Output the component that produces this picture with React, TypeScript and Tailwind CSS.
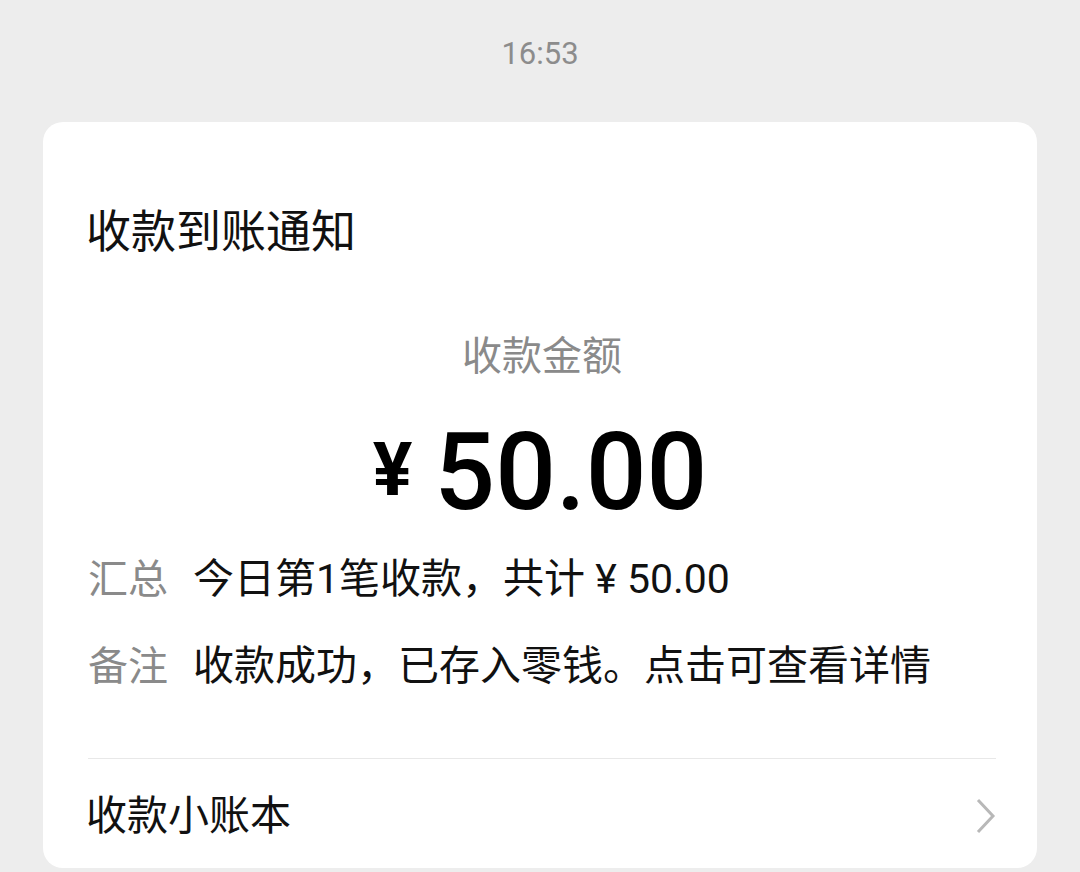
const FONT = "font-['Roboto','Noto_Sans_CJK_SC',sans-serif]";

function Row({ label, value }: { label: string; value: React.ReactNode }) {
  return (
    <div className="flex h-[87px] items-center">
      <span className="w-[105px] shrink-0 text-[40px] leading-none text-[#8a8a8a]">{label}</span>
      <span className="text-[41px] leading-none text-[#111]">{value}</span>
    </div>
  );
}

export default function App() {
  return (
    <div className={`${FONT} min-h-screen bg-[#ededed]`}>
      <div className="flex h-[108px] items-center justify-center text-[31px] text-[#8c8c8c]">16:53</div>

      <div className="mx-[43px] mt-[14px] rounded-[20px] bg-white pl-[45px] pr-[41px]">
        <div className="-ml-[2px] pt-[88px] text-[45px] leading-[45px] text-[#111]">收款到账通知</div>

        <div className="mt-[82px] text-center text-[40px] leading-[40px] text-[#8a8a8a]">收款金额</div>

        <div className="mt-[42px] flex items-start justify-center pr-[4px]">
          <span className="mr-[22px] mt-[14px] text-[74px] font-bold leading-none text-black">¥</span>
          <span className="text-[107px] font-medium leading-[107px] text-black">50.00</span>
        </div>

        <div className="mt-[10px]">
          <Row label="汇总" value="今日第1笔收款，共计 ¥ 50.00" />
          <Row label="备注" value="收款成功，已存入零钱。点击可查看详情" />
        </div>

        <div className="mt-[48px] border-t border-[#e8e8e8]" />

        <div className="flex h-[109px] items-center justify-between pt-[5px]">
          <span className="-ml-[2px] text-[41px] leading-none text-[#111]">收款小账本</span>
          <svg width="22" height="38" viewBox="0 0 22 38" className="mr-[-1px]">
            <polyline points="3,3 18,19 3,35" fill="none" stroke="#b8b8b8" strokeWidth="3" />
          </svg>
        </div>
      </div>
    </div>
  );
}
